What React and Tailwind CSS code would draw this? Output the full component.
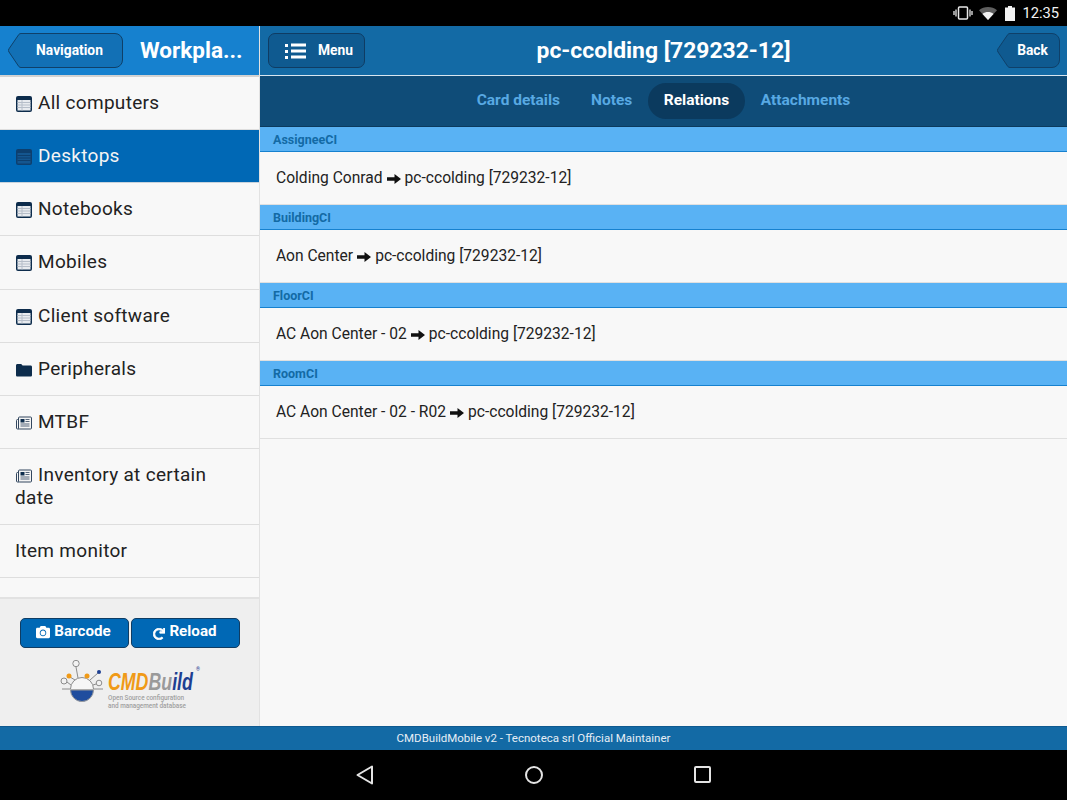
import { FaCamera, FaRedo } from "react-icons/fa";

const NAV_ITEMS = [
  { label: "All computers", icon: "table" },
  { label: "Desktops", icon: "table", active: true },
  { label: "Notebooks", icon: "table" },
  { label: "Mobiles", icon: "table" },
  { label: "Client software", icon: "table" },
  { label: "Peripherals", icon: "folder" },
  { label: "MTBF", icon: "news" },
  { label: "Inventory at certain date", icon: "news", tall: true },
  { label: "Item monitor" },
];

const RELATIONS = [
  { title: "AssigneeCI", from: "Colding Conrad" },
  { title: "BuildingCI", from: "Aon Center" },
  { title: "FloorCI", from: "AC Aon Center - 02" },
  { title: "RoomCI", from: "AC Aon Center - 02 - R02" },
];

const TABS = ["Card details", "Notes", "Relations", "Attachments"];

function NavIcon({ type }) {
  if (type === "folder") {
    return (
      <svg width="16" height="14" viewBox="0 0 16 14" className="inline-block align-[-2px] ml-[1px] mr-[6px]">
        <path d="M0 2.500C0 1.700.6 1 1.400 1h3.800l1.400 1.600h8C15.400 2.600 16 3.200 16 4v8.200c0 .8-.6 1.300-1.400 1.300H1.400C.6 13.500 0 13 0 12.200z" fill="#0d2c4c" />
      </svg>
    );
  }
  if (type === "news") {
    return (
      <svg width="16" height="14" viewBox="0 0 16 14" className="inline-block align-[-2px] ml-[1px] mr-[6px]">
        <rect x="2.500" y="1" width="13" height="12" rx="1" fill="#f4f4f4" stroke="#33475f" />
        <path d="M2.500 3.500H1.500a1 1 0 0 0-1 1V12a1 1 0 0 0 1 1h1.500" fill="none" stroke="#33475f" />
        <rect x="4.500" y="3" width="4" height="3.500" fill="#0d2c4c" />
        <path d="M9.500 3.500h4M9.500 5.500h4M4.500 8h9M4.500 10h9" stroke="#55657a" />
      </svg>
    );
  }
  return (
    <svg width="16" height="16" viewBox="0 0 16 16" className="inline-block align-[-3px] ml-[1px] mr-[6px]">
      <rect x="0" y="0" width="16" height="16" rx="2" fill="#0d2c4c" />
      <rect x="1.500" y="4" width="13" height="10.500" fill="#e8ebef" />
      <path d="M1.500 6.500h13M1.500 9h13M1.500 11.500h13M6 4v10.500" stroke="#b6bec9" strokeWidth="1" />
    </svg>
  );
}

function ActiveTableIcon() {
  return (
    <svg width="16" height="16" viewBox="0 0 16 16" className="inline-block align-[-3px] ml-[1px] mr-[6px]">
      <rect x="0" y="0" width="16" height="16" rx="2" fill="#0d3f6e" />
      <rect x="1.500" y="4" width="13" height="10.500" fill="#14568f" />
      <path d="M1.500 6.500h13M1.500 9h13M1.500 11.500h13" stroke="#0d3f6e" strokeWidth="1" />
    </svg>
  );
}

function BackButton({ width, label, fill }) {
  const d = `M13 .5H${width - 8}a7.500 7.500 0 0 1 7.500 7.500V27a7.500 7.500 0 0 1-7.500 7.500H13a3 3 0 0 1-2.200-1L1 19a2.500 2.500 0 0 1 0-3.200L10.800 1.500a3 3 0 0 1 2.200-1z`;
  return (
    <div className="relative h-[35px] flex items-center justify-center pl-[8px] pb-[1px] text-white text-[13.800px] font-bold" style={{ width }}>
      <svg width={width} height="35" viewBox={`0 0 ${width} 35`} className="absolute inset-0">
        <path d={d} fill={fill} stroke="#0f4069" />
      </svg>
      <span className="relative">{label}</span>
    </div>
  );
}

function Logo() {
  return (
    <div className="flex items-start mt-[12px] pl-[60px]">
      <svg width="44" height="43" viewBox="0 0 44 43" className="shrink-0">
        <g stroke="#8c8c8c" strokeWidth="1" fill="none">
          <path d="M18 18L16 7M15 20L10 17M26 18L27 17M30 20L38 13M11 25L7 22M33 25L36 24" />
          <path d="M2 29h41" />
          <path d="M10.500 29a11.500 11.500 0 0 1 23 0" fill="#f6f6f6" />
          <circle cx="16" cy="3.500" r="3.200" fill="#f2f2f2" />
          <circle cx="4" cy="21" r="3" fill="#f2f2f2" />
          <circle cx="39" cy="23" r="2.800" fill="#f2f2f2" />
        </g>
        <circle cx="9" cy="16" r="2.500" fill="#f09a17" />
        <circle cx="27" cy="16" r="2.500" fill="#f09a17" />
        <circle cx="39" cy="12" r="2" fill="#1d3f92" />
        <path d="M10.500 30h23a11.500 11.500 0 0 1-23 0z" fill="#1f4d9e" stroke="#9a9a9a" strokeWidth="1" />
      </svg>
      <div className="relative ml-[4px] w-[89px]">
        <div className="h-[24px] text-[24px] leading-[24px] font-bold italic mt-[10px] font-['Liberation_Sans',sans-serif] scale-x-[0.74] origin-left whitespace-nowrap">
          <span className="text-[#f09a17]">CMD</span>
          <span className="text-[#9a9a9a]">Bu</span>
          <span className="text-[#1d3f92]">ild</span>
        </div>
        <span className="absolute left-[88px] top-[7px] text-[5px] leading-[5px] text-[#1d3f92]">®</span>
        <div className="text-[6.400px] leading-[8px] text-[#a0a0a0] whitespace-nowrap font-medium">
          Open Source configuration
          <br />
          and management database
        </div>
      </div>
    </div>
  );
}

export default function App() {
  return (
    <div className="w-[1067px] h-[800px] flex flex-col overflow-hidden bg-black font-['Roboto',sans-serif]">
      {/* status bar */}
      <div className="h-[26px] shrink-0 bg-black flex items-center justify-end pr-[8px] text-[#f2f2f2]">
        <svg width="20" height="14" viewBox="0 0 20 14" className="mr-[6px]">
          <rect x="5.500" y="1" width="9" height="12" rx="1" fill="none" stroke="#e8e8e8" strokeWidth="1.500" />
          <path d="M3 3.500v7M1 5v4M17 3.500v7M19 5v4" stroke="#e8e8e8" strokeWidth="1.300" />
        </svg>
        <svg width="18" height="13" viewBox="0 0 18 13" className="mr-[8px]">
          <path d="M0 3.200C5-1 13-1 18 3.200L9 13z" fill="#5f5f5f" />
          <path d="M3.500 7C6.500 4.400 11.500 4.400 14.500 7L9 13z" fill="#f2f2f2" />
        </svg>
        <svg width="10" height="15" viewBox="0 0 10 15" className="mr-[7px]">
          <path d="M3 0h4v1.500h3V15H0V1.500h3z" fill="#f2f2f2" />
        </svg>
        <span className="text-[14.700px] leading-none">12:35</span>
      </div>

      <div className="flex h-[700px] shrink-0">
        {/* sidebar */}
        <div className="w-[260px] shrink-0 flex flex-col bg-[#f8f8f8] border-r border-[#e2e2e2]">
          <div className="h-[51px] shrink-0 bg-[#1681cf] border-b-2 border-[#d2d2d2] flex items-center pl-[8px]">
            <BackButton width={115} label="Navigation" fill="#1270b5" />
            <span className="ml-[17px] text-[22.500px] font-bold text-white leading-none">Workpla...</span>
          </div>
          <div className="flex-1">
            {NAV_ITEMS.map((item) => (
              <div
                key={item.label}
                className={`px-[15px] pt-[14px] border-b text-[19px] leading-[23px] tracking-[0.3px] ${item.tall ? "h-[76px]" : "h-[53.170px]"} ${
                  item.active ? "bg-[#0068b5] text-[#f4f4f4] border-[#c9d3dc]" : "text-[#222] border-[#dedede]"
                }`}
              >
                {item.active ? <ActiveTableIcon /> : item.icon && <NavIcon type={item.icon} />}
                {item.label}
              </div>
            ))}
          </div>
          <div className="h-[129px] shrink-0 bg-[#efefef] border-t-2 border-[#e2e2e2] pt-[19px]">
            <div className="flex pl-[20px] gap-[2px]">
              <button className="w-[109px] h-[30px] rounded-[5px] bg-[#0068b5] border border-[#0f3c63] text-white font-bold text-[15.200px] flex items-center justify-center gap-[4px] pb-[3px] pr-[2px]">
                <FaCamera size={14} className="mt-[1px]" />
                Barcode
              </button>
              <button className="w-[109px] h-[30px] rounded-[5px] bg-[#0068b5] border border-[#0f3c63] text-white font-bold text-[15.200px] flex items-center justify-center gap-[4px] pb-[3px] pr-[1px]">
                <FaRedo size={12} className="mt-[4px] stroke-[30px]" />
                Reload
              </button>
            </div>
            <Logo />
          </div>
        </div>

        {/* main */}
        <div className="flex-1 flex flex-col bg-[#f8f8f8]">
          <div className="h-[50px] shrink-0 bg-[#136aa5] border-b border-[#d8e6f0] flex items-center justify-between pl-[8px] pr-[7px] relative">
            <button className="w-[97px] h-[35px] rounded-[7px] bg-[#0f5a90] border border-[#0f3c63] text-white font-bold text-[13.800px] flex items-center pl-[16px] pb-[1px]">
              <svg width="22" height="18" viewBox="0 0 22 18" className="mr-[11px] mt-[1px]">
                <path d="M0 2h3v3H0zM0 8h3v3H0zM0 14h3v3H0zM6 1.500h15v3H6zM6 7.500h15v3H6zM6 13.500h15v3H6z" fill="white" />
              </svg>
              Menu
            </button>
            <span className="absolute left-0 right-0 text-center text-[22.900px] font-bold text-white leading-none pointer-events-none pt-[1px]">
              pc-ccolding [729232-12]
            </span>
            <BackButton width={63} label="Back" fill="#0f5a90" />
          </div>

          <div className="h-[51px] shrink-0 bg-[#0f4c78] border-b border-[#0b3a5e] flex items-center justify-center text-[15.500px] font-bold">
            {TABS.map((tab) =>
              tab === "Relations" ? (
                <span key={tab} className="h-[36px] px-[16px] rounded-full bg-[#0b3a5e] text-white flex items-center">
                  {tab}
                </span>
              ) : (
                <span key={tab} className="px-[15.500px] text-[#58a9e3]">
                  {tab}
                </span>
              )
            )}
          </div>

          {RELATIONS.map((rel) => (
            <div key={rel.title}>
              <div className="h-[25px] bg-[#59b2f4] border-b border-[#1681cf] pl-[13px] pt-[2px] flex items-center text-[12.500px] font-bold text-[#136aa5]">
                {rel.title}
              </div>
              <div className="h-[53px] border-b border-[#e0e0e0] pl-[16px] pt-[1px] flex items-center text-[15.600px] text-[#222]">
                {rel.from}
                <svg width="14" height="12" viewBox="0 0 14 12" className="ml-[4px] mr-[4px]">
                  <path d="M0 4.200h7.500V1L14 6l-6.500 5V7.800H0z" fill="#111" />
                </svg>
                pc-ccolding [729232-12]
              </div>
            </div>
          ))}
        </div>
      </div>

      {/* footer */}
      <div className="h-[24px] shrink-0 bg-[#136aa5] border-t border-[#0f5a90] flex items-center justify-center text-[11.500px] text-[#e6eef5]">
        CMDBuildMobile v2 - Tecnoteca srl Official Maintainer
      </div>

      {/* android nav bar */}
      <div className="flex-1 bg-black relative flex items-center">
        <svg width="20" height="22" viewBox="0 0 20 22" className="absolute left-[355px] top-[14px]">
          <path d="M17 2.500v17L2.500 11z" fill="none" stroke="#e4e4e4" strokeWidth="2" strokeLinejoin="round" />
        </svg>
        <svg width="20" height="20" viewBox="0 0 20 20" className="absolute left-[524px] top-[15px]">
          <circle cx="10" cy="10" r="8" fill="none" stroke="#e4e4e4" strokeWidth="2" />
        </svg>
        <svg width="18" height="18" viewBox="0 0 18 18" className="absolute left-[694px] top-[16px]">
          <rect x="1" y="1" width="15" height="15" rx="1" fill="none" stroke="#e4e4e4" strokeWidth="2" />
        </svg>
      </div>
    </div>
  );
}
